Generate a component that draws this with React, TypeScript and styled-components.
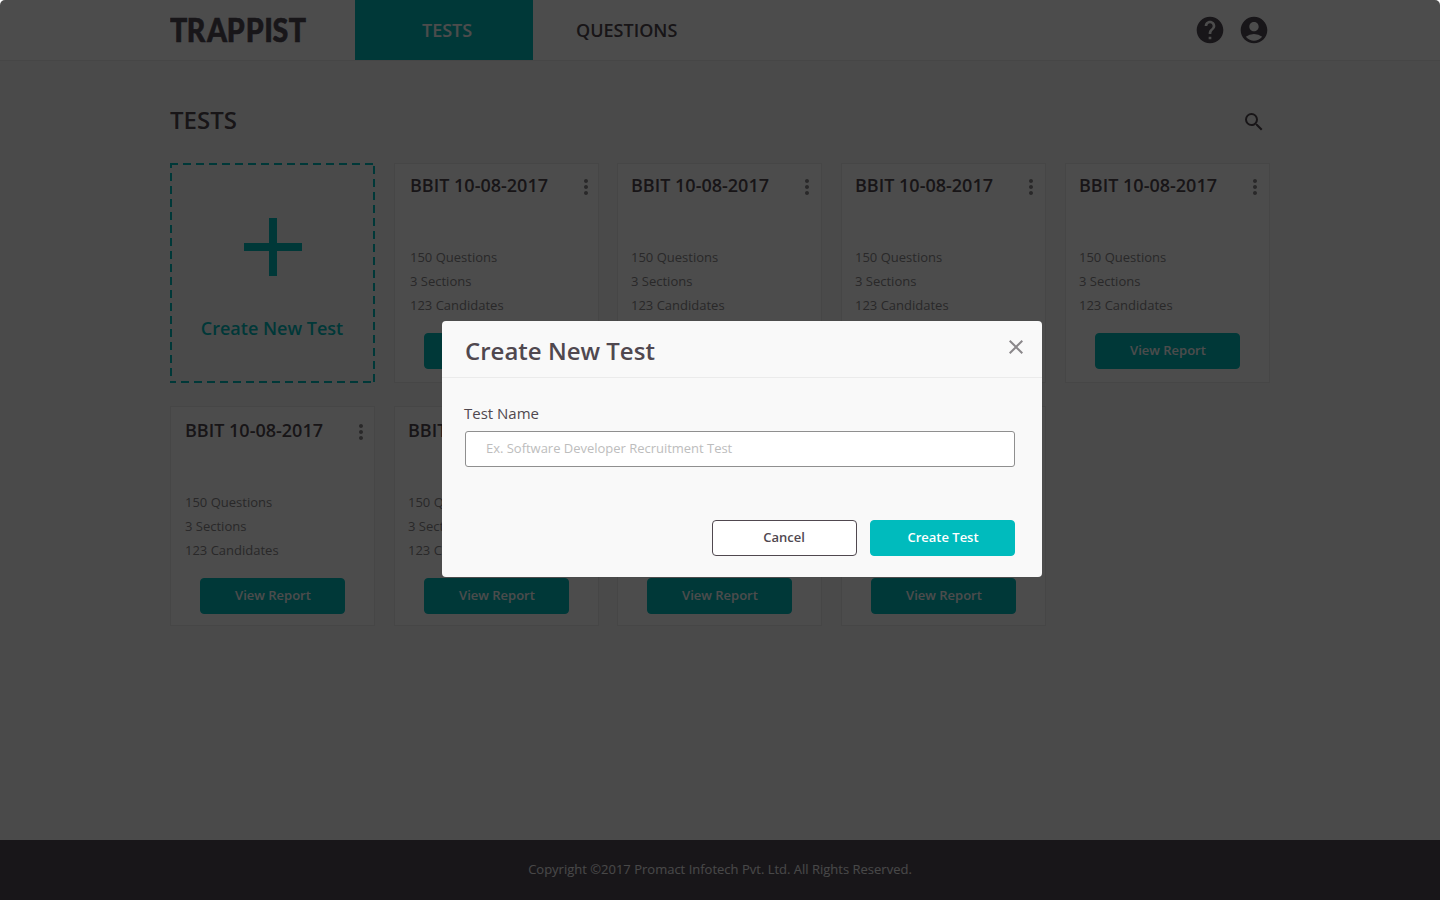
import React from "react";
import styled, { createGlobalStyle } from "styled-components";
import { MdHelp, MdAccountCircle, MdSearch, MdMoreVert, MdClose } from "react-icons/md";

const GlobalStyle = createGlobalStyle`
  * { box-sizing: border-box; }
  body {
    margin: 0;
    background: #fff;
    font-family: "Open Sans", "Noto Sans", sans-serif;
    color: #50484f;
  }
  h1, h2, p, ul { margin: 0; padding: 0; font-weight: inherit; }
  ul { list-style: none; }
  button, input { font-family: inherit; }
  svg { display: block; }
`;

const Page = styled.div`
  position: relative;
  display: flex;
  flex-direction: column;
  height: 900px;
  overflow: hidden;
  background: #f9f9f9;
  border-radius: 5px 5px 0 0;
`;

const Header = styled.header`
  display: flex;
  height: 61px;
  padding: 0 170px;
  background: #fff;
  border-bottom: 1px solid #ebebeb;
`;

const Logo = styled.div`
  width: 185px;
  color: #524a54;
  text {
    font-family: Lato, sans-serif;
    font-size: 32.5px;
    font-weight: 900;
    fill: currentColor;
    stroke: currentColor;
    stroke-width: 0.6px;
  }
`;

const NavTab = styled.a<{ $active?: boolean; $pad: string }>`
  height: 60px;
  padding-left: ${(p) => p.$pad};
  width: 178px;
  font-size: 18px;
  font-weight: 600;
  line-height: 60px;
  color: ${(p) => (p.$active ? "#fff" : "#50484f")};
  background: ${(p) => (p.$active ? "#00bbbd" : "transparent")};
`;

const HeaderIcons = styled.div`
  display: flex;
  align-items: center;
  gap: 12px;
  margin: 0 0 1px auto;
  color: #524a54;
`;

const Main = styled.main`
  flex: 1;
  padding: 42px 170px 0;
`;

const TitleBar = styled.div`
  display: flex;
  align-items: flex-end;
  justify-content: space-between;
  height: 34px;
  padding-right: 4px;
  margin-bottom: 26px;
`;

const PageTitle = styled.h1`
  font-size: 24px;
  font-weight: 600;
  line-height: 34px;
`;

const SearchIcon = styled(MdSearch)`
  margin-bottom: 3px;
`;

const Cards = styled.div`
  display: grid;
  grid-template-columns: 224px 223px 224px 224px 205px;
  grid-auto-rows: 220px;
  row-gap: 23px;
`;

const CreateCard = styled.div`
  position: relative;
  display: flex;
  flex-direction: column;
  align-items: center;
  width: 205px;
  padding-top: 55px;
  color: #00bbbd;
`;

const DashedFrame = styled.svg`
  position: absolute;
  inset: 0;
`;

const CreateLabel = styled.div`
  margin-top: 40px;
  padding-right: 1px;
  font-size: 18px;
  font-weight: 600;
  line-height: 24px;
`;

const Card = styled.article<{ $x: number; $y: number }>`
  width: 205px;
  padding: ${(p) => 9 + p.$y}px 0 0 ${(p) => p.$x}px;
  border: 1px solid #ebebeb;
  background: #fff;
`;

const CardHead = styled.div`
  display: flex;
  align-items: flex-start;
  justify-content: space-between;
  width: 188px;
  height: 24px;
  margin-bottom: 48px;
`;

const CardTitle = styled.h2`
  font-size: 18px;
  font-weight: 600;
  line-height: 24px;
  white-space: nowrap;
`;

const Kebab = styled.span`
  margin-top: 2px;
  color: #8a878a;
`;

const Stats = styled.ul`
  font-size: 13px;
  line-height: 24px;
  color: #8a878a;
`;

const Button = styled.button<{ $outline?: boolean }>`
  display: block;
  width: 145px;
  height: 36px;
  padding: ${(p) => (p.$outline ? "0 1px 2px 0" : "0 0 2px 1px")};
  border: 1px solid ${(p) => (p.$outline ? "#50484f" : "#00bbbd")};
  border-radius: 4px;
  background: ${(p) => (p.$outline ? "#fff" : "#00bbbd")};
  color: ${(p) => (p.$outline ? "#50484f" : "#fff")};
  font-size: 13px;
  font-weight: 600;
  line-height: 32px;
`;

const CardAction = styled.div<{ $x: number }>`
  margin: 16px 0 0 ${(p) => 29 - p.$x}px;
`;

const Footer = styled.footer`
  height: 60px;
  background: #524a56;
  color: #f0f0f0;
  font-size: 13px;
  line-height: 59px;
  text-align: center;
`;

const Overlay = styled.div`
  position: absolute;
  inset: 0;
  padding: 321px 0 0 442px;
  background: rgba(0, 0, 0, 0.7);
`;

const Dialog = styled.div`
  width: 600px;
  height: 256px;
  border-radius: 4px;
  background: #f9f9f9;
`;

const DialogHead = styled.div`
  display: flex;
  justify-content: space-between;
  height: 57px;
  padding: 14px 14px 0 23px;
  border-bottom: 1px solid #ebebeb;
  color: #8a878a;
`;

const DialogTitle = styled.h2`
  font-size: 24px;
  font-weight: 600;
  line-height: 32px;
  color: #50484f;
`;

const DialogBody = styled.div`
  padding: 24px 27px 0 22px;
`;

const Label = styled.label`
  display: block;
  margin-bottom: 7px;
  font-size: 15px;
  line-height: 22px;
`;

const TextInput = styled.input`
  display: block;
  width: 550px;
  height: 36px;
  margin-left: 1px;
  padding: 0 20px 2px;
  border: 1px solid #8f8f8f;
  border-radius: 3px;
  background: #fff;
  font-size: 13px;
  letter-spacing: -0.02px;
  &::placeholder { color: #bdbdbd; opacity: 1; }
`;

const DialogActions = styled.div`
  display: flex;
  justify-content: flex-end;
  gap: 13px;
  margin-top: 53px;
`;

type CardData = { x: number; y: number };

const cards: CardData[] = [
  { x: 15, y: 0 },
  { x: 13, y: 0 },
  { x: 13, y: 0 },
  { x: 13, y: 0 },
  { x: 14, y: 2 },
  { x: 13, y: 2 },
  { x: 13, y: 2 },
  { x: 13, y: 2 },
];

function TestCard({ x, y }: CardData) {
  return (
    <Card $x={x} $y={y}>
      <CardHead>
        <CardTitle>BBIT 10-08-2017</CardTitle>
        <Kebab><MdMoreVert size={24} /></Kebab>
      </CardHead>
      <Stats>
        <li>150 Questions</li>
        <li>3 Sections</li>
        <li>123 Candidates</li>
      </Stats>
      <CardAction $x={x}><Button>View Report</Button></CardAction>
    </Card>
  );
}

export default function App() {
  return (
    <>
      <GlobalStyle />
      <Page>
        <Header>
          <Logo>
            <svg width="140" height="60" role="img" aria-label="Trappist">
              <text transform="scale(0.88 1)" x="0 19 42 64.5 86 107 116.5 135" y="42">TRAPPIST</text>
            </svg>
          </Logo>
          <NavTab $active $pad="67px">TESTS</NavTab>
          <NavTab $pad="43px">QUESTIONS</NavTab>
          <HeaderIcons>
            <MdHelp size={32} />
            <MdAccountCircle size={32} />
          </HeaderIcons>
        </Header>
        <Main>
          <TitleBar>
            <PageTitle>TESTS</PageTitle>
            <SearchIcon size={24} />
          </TitleBar>
          <Cards>
            <CreateCard>
              <DashedFrame width="205" height="220" stroke="#00bbbd" strokeWidth="2" strokeDasharray="8 5">
                <line x1="0" y1="1" x2="205" y2="1" />
                <line x1="204" y1="3" x2="204" y2="220" />
                <line x1="-2" y1="219" x2="205" y2="219" />
                <line x1="1" y1="-3" x2="1" y2="220" />
              </DashedFrame>
              <svg width="58" height="58" stroke="currentColor" strokeWidth="8">
                <path d="M29 0V58M0 29H58" />
              </svg>
              <CreateLabel>Create New Test</CreateLabel>
            </CreateCard>
            {cards.map((card, i) => (
              <TestCard key={i} {...card} />
            ))}
          </Cards>
        </Main>
        <Footer>Copyright ©2017 Promact Infotech Pvt. Ltd. All Rights Reserved.</Footer>
        <Overlay>
          <Dialog>
            <DialogHead>
              <DialogTitle>Create New Test</DialogTitle>
              <MdClose size={24} />
            </DialogHead>
            <DialogBody>
              <Label htmlFor="test-name">Test Name</Label>
              <TextInput id="test-name" placeholder="Ex. Software Developer Recruitment Test" />
              <DialogActions>
                <Button $outline>Cancel</Button>
                <Button>Create Test</Button>
              </DialogActions>
            </DialogBody>
          </Dialog>
        </Overlay>
      </Page>
    </>
  );
}
